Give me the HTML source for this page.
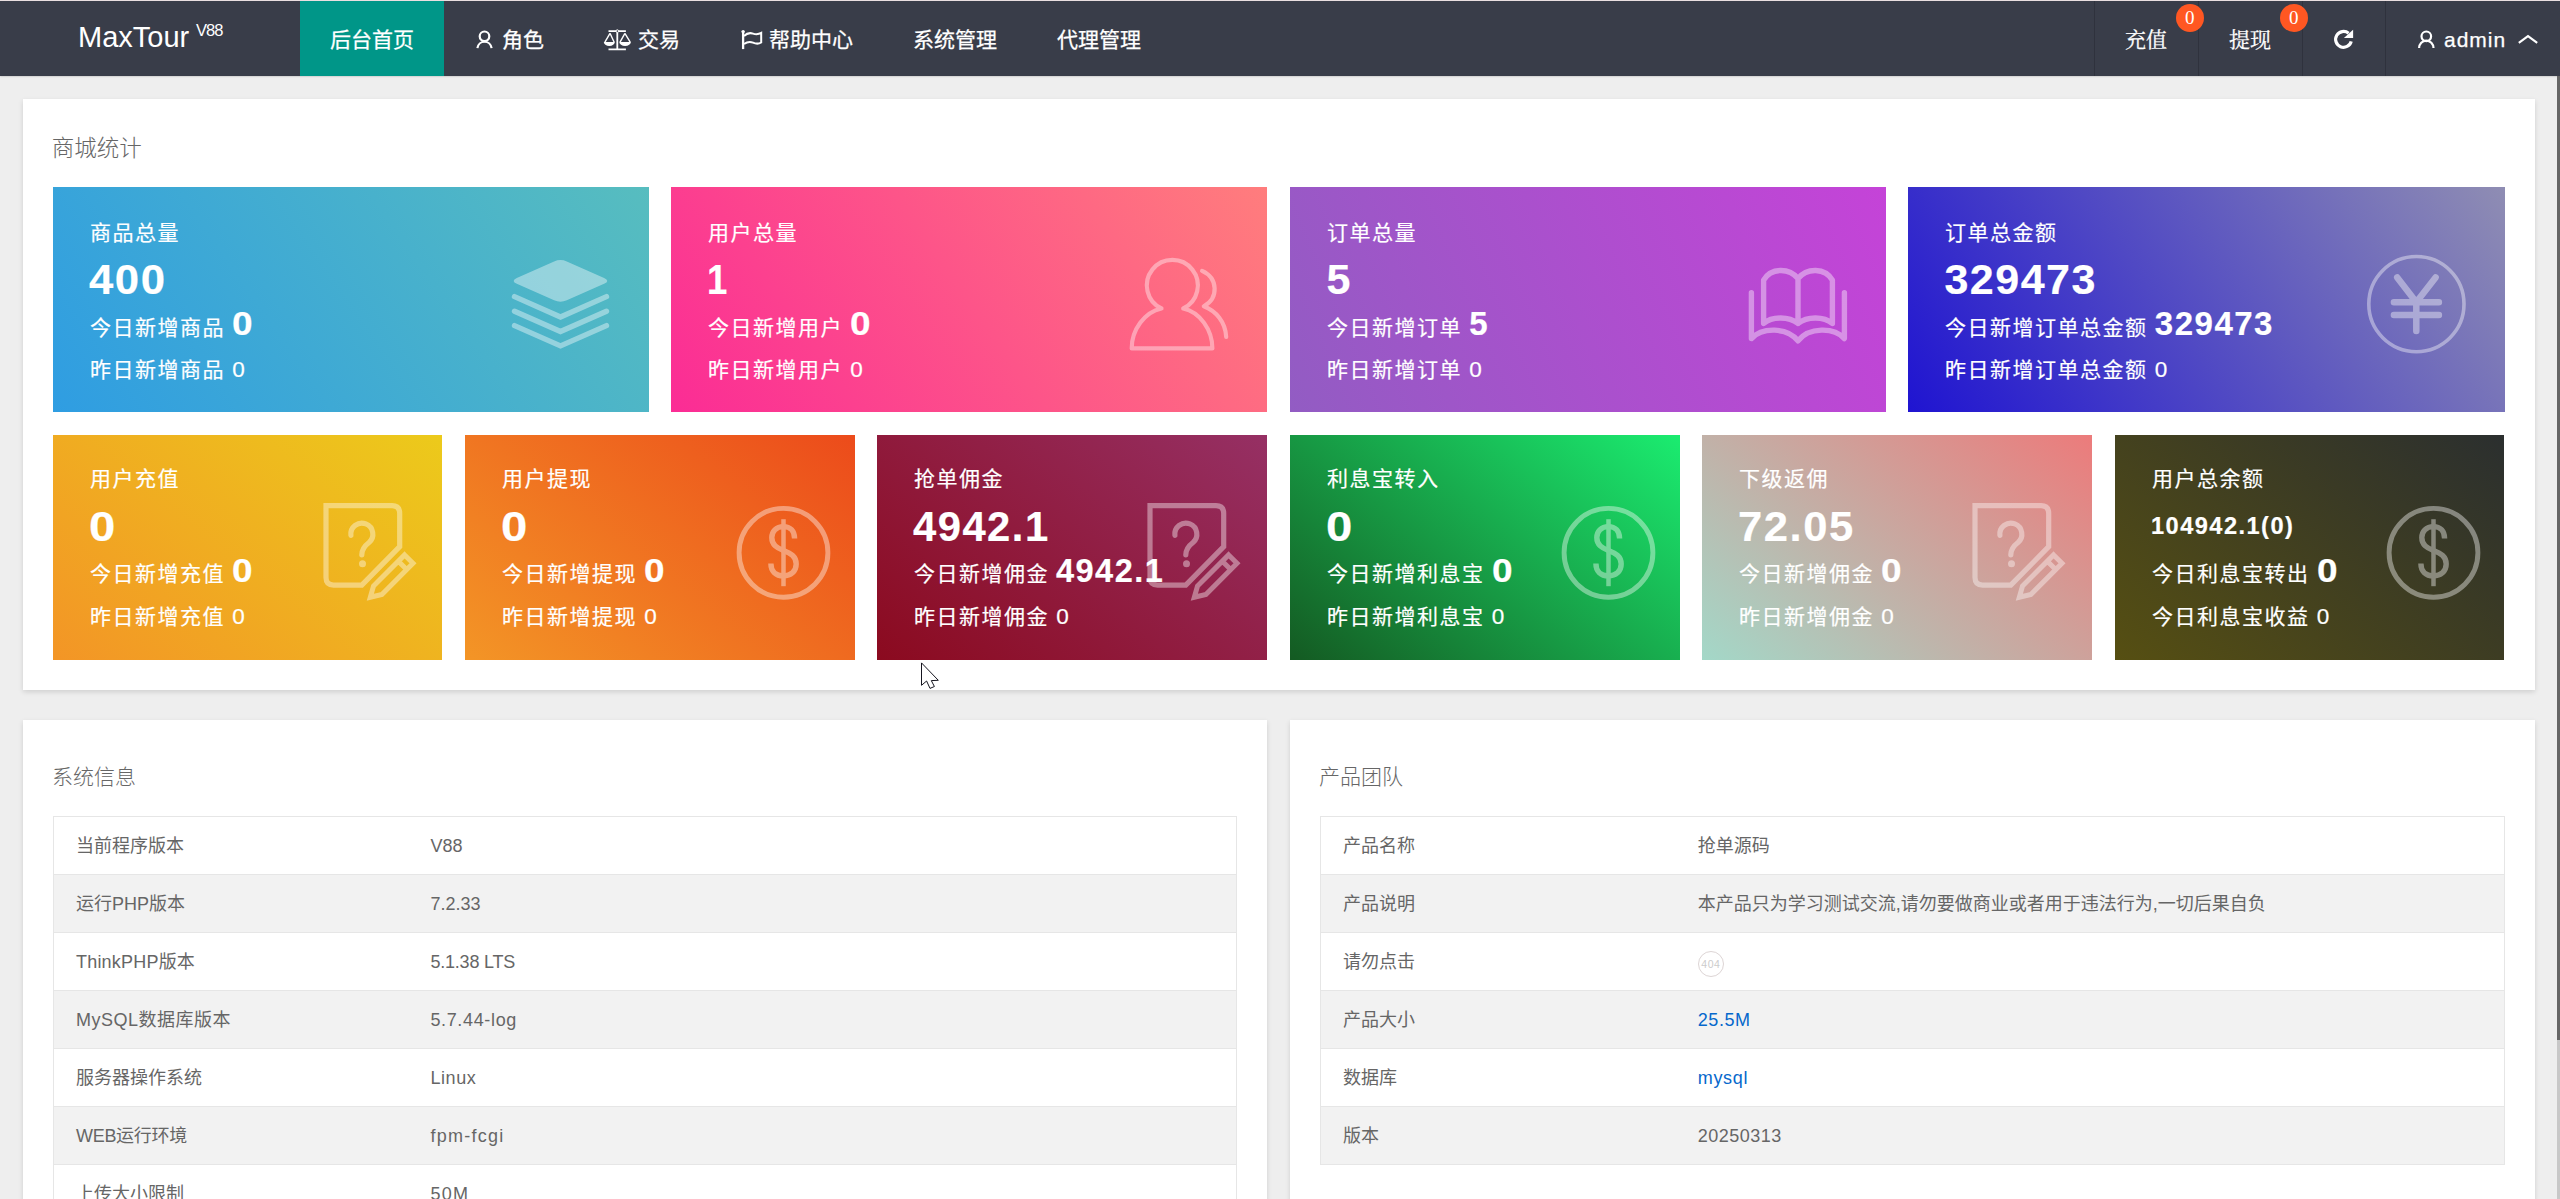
<!DOCTYPE html>
<html lang="zh-CN"><head><meta charset="utf-8"><title>MaxTour</title>
<style>
*{box-sizing:border-box;margin:0;padding:0}
html,body{width:2560px;height:1199px;overflow:hidden;background:#eee}
body{position:relative;font-family:"Liberation Sans","Noto Sans CJK SC",sans-serif;color:#666}
.abs{position:absolute}
.nav{position:absolute;left:0;top:0;width:2560px;height:76px;background:#393d49;color:#fff;border-top:1px solid #eadfe0;box-shadow:0 0 2px rgba(0,0,0,.3)}
.logo{position:absolute;left:78px;top:15.7px;font-size:29px;line-height:40px;white-space:nowrap}
.logo sup{font-size:16.5px;letter-spacing:-1px;position:absolute;left:118px;top:-6.3px;line-height:40px}
.ni{position:absolute;top:0;height:75px}
.ni.act{background:#009688}
.ni .tx{position:absolute;top:17px;font-size:21px;line-height:44px;white-space:nowrap;-webkit-text-stroke:.25px #fff}
.sf{font-family:"Liberation Serif","Noto Serif CJK SC",serif}
.sep{position:absolute;top:0;width:1px;height:75px;background:#2f323d}
.badge{position:absolute;left:80.7px;top:2.5px;width:28px;height:28px;border-radius:14px;background:#ff5722;color:#fff;font-size:19px;line-height:27px;text-align:center}
.panel{position:absolute;background:#fff;box-shadow:0 2px 5px rgba(0,0,0,.13)}
.pt{position:absolute;left:29px;top:34.5px;font-size:21px;line-height:44px;color:#666;white-space:nowrap;font-weight:300}
.pt1{font-size:22.5px;top:27.6px;left:28.8px}
.card{position:absolute;color:#fff;-webkit-text-stroke:.2px #fff;font-size:21px;letter-spacing:1.5px;white-space:nowrap;overflow:hidden}
.card>div{position:absolute;left:37px}
.card .ct{top:24.8px;height:42px;line-height:42px}
.card .num{top:68.5px;left:36.4px!important;height:48px;line-height:48px;font-size:43px;font-weight:bold;letter-spacing:1.5px;transform:scaleX(var(--ns,1));transform-origin:0 50%}
.card .num.small{font-size:24px}
.card .la{top:112.6px;height:48px;line-height:48px}
.card .la .av{font-size:33px;font-weight:bold;display:inline-block;transform:scaleX(var(--as,1));transform-origin:0 50%;position:relative;top:.8px;left:0}
.card .lb{top:162px;height:42px;line-height:42px}
.card .lb .bv{position:relative;top:.4px;left:0;font-size:22.5px}
.card .ico{position:absolute;left:0!important;top:0}
.card .ico svg{display:block}
.tb{position:absolute}
table{width:100%;border-collapse:collapse;font-size:18px;color:#666}
td{height:58px;line-height:26px;border:1px solid #e6e6e6;border-left:0;border-right:0;padding:0 22px;white-space:nowrap}
td.k{border-left:1px solid #e6e6e6}td.v{border-right:1px solid #e6e6e6}
td.k{width:30%}
tr:nth-child(even){background:#f2f2f2}
td a{color:#0668cc}
.c404{display:inline-block;width:26.4px;height:26.4px;border:1px solid #ddd5d5;border-radius:50%;font-size:10.5px;color:#ccc;text-align:center;line-height:24.4px;vertical-align:middle;position:relative;top:2px;letter-spacing:.5px}
.sbt{position:absolute;left:2557px;top:76px;width:3px;height:1123px;background:#c8c8c8}
.sbh{position:absolute;left:2557px;top:76px;width:3px;height:964px;background:#666}
.adm{letter-spacing:1px;font-size:21.5px;-webkit-text-stroke:.5px #fff;margin-top:-.5px}
.r2>div:not(.ico){margin-top:-1.2px}
.r1 .num{margin-top:-1px}
.r2 .ct{margin-top:-2px!important}

</style></head>
<body>
<div class="nav">
<div class="logo">MaxTour <sup>V88</sup></div>
<div class="ni act" style="left:300px;width:144px"><span class="tx" style="left:30px">后台首页</span></div>
<div class="ni" style="left:444px;width:130px"><span class="tx" style="left:58px">角色</span></div>
<div class="ni" style="left:574px;width:136px"><span class="tx" style="left:64px">交易</span></div>
<div class="ni" style="left:710px;width:173px"><span class="tx" style="left:59px">帮助中心</span></div>
<div class="ni" style="left:883px;width:144px"><span class="tx" style="left:30px">系统管理</span></div>
<div class="ni" style="left:1027px;width:144px"><span class="tx" style="left:30px">代理管理</span></div>
<div class="sep" style="left:2094px"></div><div class="sep" style="left:2198px"></div><div class="sep" style="left:2302px"></div><div class="sep" style="left:2385px"></div>
<div class="ni sf" style="left:2095px;width:103px"><span class="tx" style="left:30px">充值</span><span class="badge">0</span></div>
<div class="ni sf" style="left:2199px;width:103px"><span class="tx" style="left:30px">提现</span><span class="badge">0</span></div>
<div class="ni" style="left:2303px;width:82px"></div>
<div class="ni" style="left:2386px;width:174px"><span class="tx adm" style="left:58px">admin</span></div>
</div>
<svg class="abs" style="left:470px;top:26px" width="30" height="28" viewBox="470 26 30 28" ><g fill="none" stroke="#fff" stroke-width="2.2" stroke-linecap="butt"><circle cx="484.5" cy="36.3" r="4.8"/><path d="M477.4 48.1 A7.2 7.6 0 0 1 491.6 48.1"/></g></svg><svg class="abs" style="left:600px;top:26px" width="34" height="28" viewBox="600 26 34 28" ><g fill="none" stroke="#fff" stroke-linecap="butt"><path stroke-width="1.8" d="M608.5 31.1 H625.9 M617.3 31.7 V48.9 M608.5 49.4 H625.9"/><path stroke-width="1.4" d="M610 33.3 L604.9 42.2 M610 33.3 L614.2 42.2 M624.9 33.3 L620 42.2 M624.9 33.3 L630.2 42.2"/><path fill="#fff" stroke="none" d="M603.8 41.9 H614.8 A5.5 4.2 0 0 1 603.8 41.9Z M619.3 41.9 H630.9 A5.8 4.2 0 0 1 619.3 41.9Z"/><circle cx="617.3" cy="31.1" r="1.3" stroke-width="1" fill="#393d49"/></g></svg><svg class="abs" style="left:738px;top:26px" width="28" height="28" viewBox="738 26 28 28" ><g fill="none" stroke="#fff" stroke-linejoin="miter"><path stroke-width="2.3" d="M743.1 31 L743.1 49.1"/><circle cx="743.1" cy="31.6" r="1.7" fill="#fff" stroke="none"/><path stroke-width="2" d="M744 36 C747 33 750 32.6 753 33.6 C756 34.6 759 34.2 761.2 32.9 L761.2 42.5 C759 43.8 756 44 753 42.6 C750 41.3 747 41.8 744 44"/></g></svg><svg class="abs" style="left:2330px;top:26px" width="28" height="28" viewBox="2330 26 28 28" ><path fill="none" stroke="#fff" stroke-width="3.2" d="M2351.2 41.3 A7.9 7.9 0 1 1 2348.6 33.3"/><path fill="#fff" d="M2353.1 29.8 L2353.1 38.1 L2343.9 38.1Z"/></svg><svg class="abs" style="left:2412px;top:26px" width="30" height="28" viewBox="2412 26 30 28" ><g fill="none" stroke="#fff" stroke-width="2.2" stroke-linecap="butt"><circle cx="2426.3" cy="36.3" r="4.8"/><path d="M2419.1 48.1 A7.2 7.6 0 0 1 2433.5 48.1"/></g></svg><svg class="abs" style="left:2514px;top:30px" width="28" height="18" viewBox="2514 30 28 18" ><path fill="none" stroke="#fff" stroke-width="2.1" d="M2518.8 42.9 L2528 36.1 L2537.2 42.9"/></svg>
<div class="panel" style="left:23px;top:99px;width:2512px;height:591px"><div class="pt pt1">商城统计</div></div>
<div class="card r1" style="left:53px;top:187px;width:596px;height:225px;background:linear-gradient(-125deg,#57bdbf,#2f9de2);--ns:1.016;--as:1.12">
<div class="ct">商品总量</div>
<div class="num">400</div>
<div class="la">今日新增商品 <span class="av">0</span></div>
<div class="lb">昨日新增商品 <span class="bv">0</span></div>
<div class="ico ico-layers"><svg width="596" height="224" viewBox="53 187 596 224"><g opacity=".4"><g fill="#fff" stroke="none"><path d="M516.8 283.8 Q510.5 280.9 516.8 278.0 L554.1 261.5 Q560.5 258.6 566.8 261.5 L604.1 278.0 Q610.5 280.9 604.1 283.8 L566.8 300.3 Q560.5 303.2 554.1 300.3 Z"/></g>
<g fill="none" stroke="#fff" stroke-width="5.4" stroke-linecap="round" stroke-linejoin="miter"><path d="M514.5 296.6 L560.5 317 L606.5 296.6"/><path d="M514.5 311.2 L560.5 331.5 L606.5 311.2"/><path d="M514.5 325.6 L560.5 345.9 L606.5 325.6"/></g></g></svg></div>
</div>
<div class="card r1" style="left:671px;top:187px;width:596px;height:225px;background:linear-gradient(-125deg,#ff7d7d,#fb2c95);--ns:0.85;--as:1.12">
<div class="ct">用户总量</div>
<div class="num">1</div>
<div class="la">今日新增用户 <span class="av">0</span></div>
<div class="lb">昨日新增用户 <span class="bv">0</span></div>
<div class="ico ico-users"><svg width="596" height="224" viewBox="671 187 596 224"><g opacity=".4"><g fill="none" stroke="#fff" stroke-width="4.2" stroke-linecap="round" stroke-linejoin="round">
<path d="M1161.5 308.5 A25.5 25.5 0 1 1 1183.2 308.5 C1200 312 1212.4 330 1212.4 348.4 L1131.7 348.4 C1131.7 330 1144.5 312 1161.5 308.5Z"/>
<path d="M1202.1 270.9 C1218 278 1219 298 1203.8 306.3 C1216 311 1225.5 322 1226.2 337"/></g></g></svg></div>
</div>
<div class="card r1" style="left:1290px;top:187px;width:596px;height:225px;background:linear-gradient(-113deg,#c543d8,#925cc3);--ns:1;--as:1">
<div class="ct">订单总量</div>
<div class="num">5</div>
<div class="la">今日新增订单 <span class="av">5</span></div>
<div class="lb">昨日新增订单 <span class="bv">0</span></div>
<div class="ico ico-book"><svg width="596" height="224" viewBox="1290 187 596 224"><g opacity=".4"><g fill="none" stroke="#fff" stroke-width="5.4" stroke-linecap="round" stroke-linejoin="round">
<path d="M1751.4 292.6 L1751.4 338.6 C1762 327 1787 327 1798 340.8 C1809 327 1834 327 1844.4 338.6 L1844.4 292.6"/>
<path d="M1798 278.5 L1798 323.5 C1789 316.2 1772 316.2 1763.6 323.5 L1763.6 280.1 C1771 267.5 1789 267.5 1798 278.5 C1807 267.5 1825 267.5 1832.4 280.1 L1832.4 323.5 C1824 316.2 1807 316.2 1798 323.5"/></g></g></svg></div>
</div>
<div class="card r1" style="left:1908px;top:187px;width:597px;height:225px;background:linear-gradient(-125deg,#8f8db3,#1f14d1);--ns:1;--as:1">
<div class="ct">订单总金额</div>
<div class="num">329473</div>
<div class="la">今日新增订单总金额 <span class="av">329473</span></div>
<div class="lb">昨日新增订单总金额 <span class="bv">0</span></div>
<div class="ico ico-yen"><svg width="597" height="224" viewBox="1908 187 597 224"><g opacity=".4"><g fill="none" stroke="#fff" stroke-linecap="round" stroke-linejoin="round"><circle cx="2416.4" cy="304.1" r="47.6" stroke-width="3.6"/>
<path stroke-width="6.5" d="M2397.2 277.4 L2416.3 302.3 L2435.6 277.4 M2393.9 302.3 L2438.9 302.3 M2393.9 315 L2438.9 315 M2416.3 302.3 L2416.3 331.1"/></g></g></svg></div>
</div>
<div class="card r2" style="left:53px;top:435px;width:389px;height:225px;background:linear-gradient(-141deg,#ecca1b,#f39526);--ns:1.1;--as:1.12">
<div class="ct">用户充值</div>
<div class="num">0</div>
<div class="la">今日新增充值 <span class="av">0</span></div>
<div class="lb">昨日新增充值 <span class="bv">0</span></div>
<div class="ico ico-survey"><svg width="389" height="225" viewBox="53 435 389 225"><g opacity=".4"><g fill="none" stroke="#fff" stroke-width="5.2" stroke-linejoin="miter">
<path d="M326 505.7 L392.1 505.7 Q399.7 505.7 399.7 513.6 L399.7 546.7 L361.8 585.1 L333.6 585.1 Q326 585.1 326 577.6Z"/>
<path stroke-linecap="round" stroke-linejoin="round" d="M350.9 535.3 A11 11 0 1 1 369 542.5 Q361.8 548 361.8 554.8"/>
<path stroke-width="5" d="M404.6 554.9 L413 563.3 L381.9 594.4 L370.3 597.2 L373.5 586Z M398.3 561.2 L406.7 569.6"/>
</g><circle cx="362.5" cy="563.7" r="3.5" fill="#fff"/></g></svg></div>
</div>
<div class="card r2" style="left:465px;top:435px;width:390px;height:225px;background:linear-gradient(-141deg,#ec4b1b,#f39526);--ns:1.1;--as:1.12">
<div class="ct">用户提现</div>
<div class="num">0</div>
<div class="la">今日新增提现 <span class="av">0</span></div>
<div class="lb">昨日新增提现 <span class="bv">0</span></div>
<div class="ico ico-dollar"><svg width="390" height="225" viewBox="465 435 390 225"><g opacity=".4"><g fill="none" stroke="#fff"><circle cx="783.5" cy="552.8" r="44.4" stroke-width="4.9"/>
<path stroke-width="4.5" d="M783.5 519.2 L783.5 586.2"/>
<path stroke-width="5.4" d="M794.6 538.5 C794.6 531 790 526.6 783.5 526.6 C776 526.6 771.8 531.5 771.8 537.5 C771.8 545 777 548 783.5 550.5 C791 553.5 796.2 556.5 796.2 564 C796.2 571.5 790.5 575.9 783.5 575.9 C775.5 575.9 770.9 571 770.9 563.5"/></g></g></svg></div>
</div>
<div class="card r2" style="left:877px;top:435px;width:390px;height:225px;background:linear-gradient(-141deg,#963064,#8b0a1f);--ns:0.972;--as:0.985">
<div class="ct">抢单佣金</div>
<div class="num">4942.1</div>
<div class="la">今日新增佣金 <span class="av">4942.1</span></div>
<div class="lb">昨日新增佣金 <span class="bv">0</span></div>
<div class="ico ico-survey"><svg width="389" height="225" viewBox="53 435 389 225"><g opacity=".4"><g fill="none" stroke="#fff" stroke-width="5.2" stroke-linejoin="miter">
<path d="M326 505.7 L392.1 505.7 Q399.7 505.7 399.7 513.6 L399.7 546.7 L361.8 585.1 L333.6 585.1 Q326 585.1 326 577.6Z"/>
<path stroke-linecap="round" stroke-linejoin="round" d="M350.9 535.3 A11 11 0 1 1 369 542.5 Q361.8 548 361.8 554.8"/>
<path stroke-width="5" d="M404.6 554.9 L413 563.3 L381.9 594.4 L370.3 597.2 L373.5 586Z M398.3 561.2 L406.7 569.6"/>
</g><circle cx="362.5" cy="563.7" r="3.5" fill="#fff"/></g></svg></div>
</div>
<div class="card r2" style="left:1290px;top:435px;width:390px;height:225px;background:linear-gradient(-141deg,#1bec70,#145a22);--ns:1.1;--as:1.12">
<div class="ct">利息宝转入</div>
<div class="num">0</div>
<div class="la">今日新增利息宝 <span class="av">0</span></div>
<div class="lb">昨日新增利息宝 <span class="bv">0</span></div>
<div class="ico ico-dollar"><svg width="390" height="225" viewBox="465 435 390 225"><g opacity=".4"><g fill="none" stroke="#fff"><circle cx="783.5" cy="552.8" r="44.4" stroke-width="4.9"/>
<path stroke-width="4.5" d="M783.5 519.2 L783.5 586.2"/>
<path stroke-width="5.4" d="M794.6 538.5 C794.6 531 790 526.6 783.5 526.6 C776 526.6 771.8 531.5 771.8 537.5 C771.8 545 777 548 783.5 550.5 C791 553.5 796.2 556.5 796.2 564 C796.2 571.5 790.5 575.9 783.5 575.9 C775.5 575.9 770.9 571 770.9 563.5"/></g></g></svg></div>
</div>
<div class="card r2" style="left:1702px;top:435px;width:390px;height:225px;background:linear-gradient(-141deg,#ec7b7b,#a3d8c8);--ns:1.014;--as:1.12">
<div class="ct">下级返佣</div>
<div class="num">72.05</div>
<div class="la">今日新增佣金 <span class="av">0</span></div>
<div class="lb">昨日新增佣金 <span class="bv">0</span></div>
<div class="ico ico-survey"><svg width="389" height="225" viewBox="53 435 389 225"><g opacity=".4"><g fill="none" stroke="#fff" stroke-width="5.2" stroke-linejoin="miter">
<path d="M326 505.7 L392.1 505.7 Q399.7 505.7 399.7 513.6 L399.7 546.7 L361.8 585.1 L333.6 585.1 Q326 585.1 326 577.6Z"/>
<path stroke-linecap="round" stroke-linejoin="round" d="M350.9 535.3 A11 11 0 1 1 369 542.5 Q361.8 548 361.8 554.8"/>
<path stroke-width="5" d="M404.6 554.9 L413 563.3 L381.9 594.4 L370.3 597.2 L373.5 586Z M398.3 561.2 L406.7 569.6"/>
</g><circle cx="362.5" cy="563.7" r="3.5" fill="#fff"/></g></svg></div>
</div>
<div class="card r2" style="left:2115px;top:435px;width:389px;height:225px;background:linear-gradient(-141deg,#2b2f2f,#564f12);--ns:0.982;--as:1.12">
<div class="ct">用户总余额</div>
<div class="num small">104942.1(0)</div>
<div class="la">今日利息宝转出 <span class="av">0</span></div>
<div class="lb">今日利息宝收益 <span class="bv">0</span></div>
<div class="ico ico-dollar"><svg width="390" height="225" viewBox="465 435 390 225"><g opacity=".4"><g fill="none" stroke="#fff"><circle cx="783.5" cy="552.8" r="44.4" stroke-width="4.9"/>
<path stroke-width="4.5" d="M783.5 519.2 L783.5 586.2"/>
<path stroke-width="5.4" d="M794.6 538.5 C794.6 531 790 526.6 783.5 526.6 C776 526.6 771.8 531.5 771.8 537.5 C771.8 545 777 548 783.5 550.5 C791 553.5 796.2 556.5 796.2 564 C796.2 571.5 790.5 575.9 783.5 575.9 C775.5 575.9 770.9 571 770.9 563.5"/></g></g></svg></div>
</div>
<div class="panel" style="left:23px;top:720px;width:1244px;height:520px"><div class="pt">系统信息</div>
<div class="tb" style="left:30px;top:96px;width:1184px"><table><tr><td class="k">当前程序版本</td><td class="v">V88</td></tr><tr><td class="k">运行PHP版本</td><td class="v">7.2.33</td></tr><tr><td class="k" style="letter-spacing:0.2px">ThinkPHP版本</td><td class="v" style="letter-spacing:-0.2px">5.1.38 LTS</td></tr><tr><td class="k" style="letter-spacing:0.5px">MySQL数据库版本</td><td class="v" style="letter-spacing:0.65px">5.7.44-log</td></tr><tr><td class="k">服务器操作系统</td><td class="v" style="letter-spacing:0.6px">Linux</td></tr><tr><td class="k" style="letter-spacing:-0.3px">WEB运行环境</td><td class="v" style="letter-spacing:1.25px">fpm-fcgi</td></tr><tr><td class="k">上传大小限制</td><td class="v" style="letter-spacing:1.3px">50M</td></tr><tr><td class="k">POST大小限制</td><td class="v" style="letter-spacing:1.3px">50M</td></tr></table></div></div>
<div class="panel" style="left:1290px;top:720px;width:1245px;height:520px"><div class="pt">产品团队</div>
<div class="tb" style="left:30px;top:96px;width:1185px"><table><tr><td class="k">产品名称</td><td class="v">抢单源码</td></tr><tr><td class="k">产品说明</td><td class="v">本产品只为学习测试交流,请勿要做商业或者用于违法行为,一切后果自负</td></tr><tr><td class="k">请勿点击</td><td class="v"><span class="c404"><span>404</span></span></td></tr><tr><td class="k">产品大小</td><td class="v" style="letter-spacing:0.6px"><a>25.5M</a></td></tr><tr><td class="k">数据库</td><td class="v" style="letter-spacing:0.7px"><a>mysql</a></td></tr><tr><td class="k">版本</td><td class="v" style="letter-spacing:0.5px">20250313</td></tr></table></div></div>
<div class="sbt"></div><div class="sbh"></div>
<svg class="abs" style="left:918px;top:660px" width="24" height="34" viewBox="918 660 24 34" ><path d="M921.5 662.9 L921.5 685.3 L926.6 681 L930 688.4 L934.4 686.5 L931.3 680.6 L938.3 680.3Z" fill="#fff" stroke="#15151f" stroke-width="1" stroke-linejoin="miter"/></svg>
</body></html>
